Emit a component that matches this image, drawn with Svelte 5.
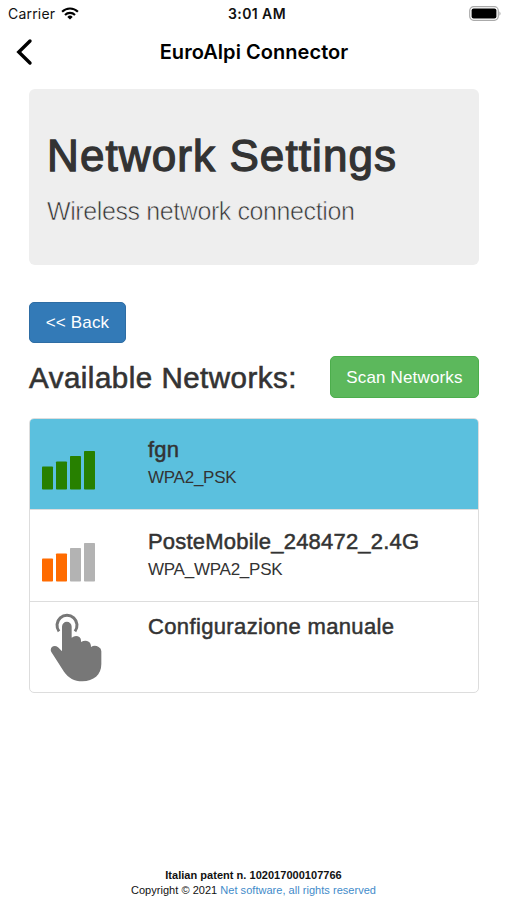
<script lang="ts">
	type Network = { name: string; security?: string; strength?: number; active?: boolean };

	const networks: Network[] = [
		{ name: 'fgn', security: 'WPA2_PSK', strength: 4, active: true },
		{ name: 'PosteMobile_248472_2.4G', security: 'WPA_WPA2_PSK', strength: 2 },
		{ name: 'Configurazione manuale' }
	];

	const bars = [
		{ x: 0, h: 23 },
		{ x: 14, h: 28 },
		{ x: 28, h: 33.5 },
		{ x: 42, h: 38.5 }
	];

	function barColor(index: number, strength: number) {
		if (index >= strength) return '#b3b3b3';
		return strength > 2 ? '#278000' : '#ff6b00';
	}
</script>

<div class="screen">
	<div class="status">
		<span class="carrier">Carrier</span>
		<svg class="wifi" width="18" height="13" viewBox="0 0 18 13">
			<g fill="none" stroke="#000" stroke-width="2.1">
				<path d="M1.1 4.7a11.2 11.2 0 0 1 15.8 0" />
				<path d="M4 7.9a7.1 7.1 0 0 1 10 0" />
			</g>
			<path d="M6.3 9.9a3.8 3.8 0 0 1 5.4 0L9 12.6z" />
		</svg>
		<span class="time">3:01 AM</span>
		<svg class="battery" width="33" height="15" viewBox="0 0 33 15">
			<rect x=".7" y=".7" width="28.6" height="13.6" rx="4" fill="none" stroke="#aaa" stroke-width="1.2" />
			<rect x="2.6" y="2.6" width="24.8" height="9.8" rx="2" />
			<path d="M30.5 5.2q2 2.3 0 4.6z" fill="#999" />
		</svg>
	</div>

	<header class="navbar">
		<svg class="chevron" width="18" height="28" viewBox="0 0 18 28">
			<path
				d="M15 3 3.8 14 15 25"
				fill="none"
				stroke="#000"
				stroke-width="3.4"
				stroke-linecap="round"
			/>
		</svg>
		<span class="title">EuroAlpi Connector</span>
	</header>

	<main>
		<section class="jumbotron">
			<h1>Network Settings</h1>
			<p>Wireless network connection</p>
		</section>

		<button class="btn primary">&lt;&lt; Back</button>

		<div class="toolbar">
			<h2>Available Networks:</h2>
			<button class="btn success">Scan Networks</button>
		</div>

		<ul class="networks">
			{#each networks as network}
				<li class:active={network.active} class:manual={!network.strength}>
					<div class="icon">
						{#if network.strength}
							<svg class="signal" width="54" height="40" viewBox="0 0 54 40">
								{#each bars as bar, i}
									<rect
										x={bar.x}
										y={39.5 - bar.h}
										width="11"
										height={bar.h}
										rx=".8"
										fill={barColor(i, network.strength)}
									/>
								{/each}
							</svg>
						{:else}
							<svg class="hand" width="52" height="70" viewBox="76 280 156 210">
								<path
									d="M103 335A30 30 0 1 1 151 335"
									fill="none"
									stroke="#777"
									stroke-width="9"
								/>
								<path
									d="M112 321a14.5 14.5 0 0 1 29 0V354q13-10 24-1 5 4 4 14 13-7 23-1 7 4 7 16 11-7 23 0 8 4 8 13v38c0 33-23 51-57 52-25 0-41-10-55-29L80 397c-7-12 8-24 20-14l12 12z"
									fill="#777"
								/>
							</svg>
						{/if}
					</div>
					<div class="info">
						<h3>{network.name}</h3>
						{#if network.security}<p>{network.security}</p>{/if}
					</div>
				</li>
			{/each}
		</ul>
	</main>

	<footer>
		<strong>Italian patent n. 102017000107766</strong>
		<div class="copyright">Copyright © 2021 <a href="#top">Net software, all rights reserved</a></div>
	</footer>
</div>

<style>
	:global(body) {
		margin: 0;
		background: #fff;
	}

	.screen {
		box-sizing: border-box;
		display: flex;
		flex-direction: column;
		width: 507px;
		height: 900px;
		overflow: hidden;
		font-family: 'Liberation Sans', Arial, sans-serif;
		color: #333;
		white-space: nowrap;
	}

	.status {
		display: grid;
		grid-template-columns: 48px 166px 1fr 33px;
		column-gap: 5px;
		align-items: center;
		height: 27px;
		padding: 0 5px 0 8px;
		font-family: Inter, sans-serif;
		font-size: 14px;
		color: #111;
	}

	.carrier {
		letter-spacing: 0.2px;
	}

	.time {
		margin-left: -4px;
		font-weight: 600;
		letter-spacing: 0.4px;
	}

	.navbar {
		display: grid;
		grid-template-columns: 30px 1fr 30px;
		align-items: center;
		height: 50px;
		padding: 0 14px 0 15px;
	}

	.title {
		text-align: center;
		font-family: Inter, sans-serif;
		font-size: 20px;
		font-weight: 600;
		letter-spacing: 0.05px;
		color: #000;
	}

	main {
		display: flex;
		flex-direction: column;
		align-items: flex-start;
		padding: 12px 28px 0 29px;
	}

	h1,
	h2,
	h3,
	p {
		margin: 0;
		font-weight: 400;
	}

	.jumbotron {
		box-sizing: border-box;
		width: 100%;
		height: 176px;
		padding: 42px 18px 0;
		border-radius: 6px;
		background: #eee;
	}

	h1 {
		font-size: 44px;
		line-height: 50px;
		letter-spacing: 1.1px;
		-webkit-text-stroke: 1.3px #333;
	}

	.jumbotron p {
		margin-top: 15px;
		font-size: 25px;
		line-height: 30px;
		letter-spacing: -0.4px;
		-webkit-text-stroke: 0.6px #eee;
	}

	.btn {
		box-sizing: border-box;
		height: 42px;
		padding: 2px 0 0;
		border: 1px solid;
		border-radius: 5px;
		font-family: inherit;
		font-size: 17px;
		line-height: 38px;
		letter-spacing: 0.15px;
		text-align: center;
		color: #fff;
		white-space: nowrap;
	}

	.primary {
		width: 97px;
		height: 41px;
		margin-top: 37px;
		padding-top: 1px;
		border-color: #2e6da4;
		background: #337ab7;
	}

	.success {
		width: 149px;
		border-color: #4cae4c;
		background: #5cb85c;
	}

	.toolbar {
		display: flex;
		align-items: center;
		justify-content: space-between;
		width: 100%;
		margin-top: 13px;
	}

	h2 {
		padding-top: 2px;
		font-size: 29.5px;
		line-height: 34px;
		letter-spacing: 0.5px;
		-webkit-text-stroke: 0.6px #333;
	}

	.networks {
		box-sizing: border-box;
		width: 100%;
		height: 275px;
		margin: 20px 0 0;
		padding: 0;
		border: 1px solid #ddd;
		border-radius: 5px;
		overflow: hidden;
		list-style: none;
	}

	li {
		box-sizing: border-box;
		display: grid;
		grid-template-columns: 105px 1fr;
		height: 91.5px;
		padding: 18px 13px 0;
		border-bottom: 1px solid #ddd;
	}

	li.active {
		height: 91px;
		padding-top: 17px;
		background: #5bc0de;
	}

	li.manual {
		padding-top: 11px;
		border-bottom: 0;
	}

	.icon svg {
		display: block;
	}

	.signal {
		margin: 14px 0 0 -1px;
	}

	.hand {
		margin-left: 7px;
	}

	h3 {
		font-size: 22px;
		line-height: 28px;
		letter-spacing: 0.2px;
		-webkit-text-stroke: 0.5px #333;
	}

	.manual h3 {
		letter-spacing: 0.36px;
	}

	.info p {
		font-size: 17px;
		line-height: 28px;
		letter-spacing: -0.25px;
	}

	footer {
		margin-top: auto;
		padding-bottom: 2px;
		text-align: center;
		font-size: 11px;
		line-height: 15px;
		letter-spacing: 0.03px;
		color: #111;
	}

	a {
		color: #428bca;
		text-decoration: none;
	}
</style>
